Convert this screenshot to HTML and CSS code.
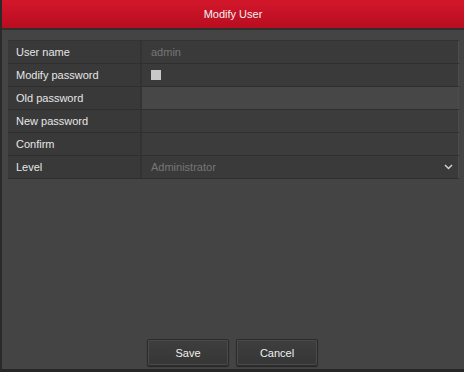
FILE: index.html
```html
<!DOCTYPE html>
<html lang="en">
<head>
    <meta charset="UTF-8">
    <title>Modify User</title>
    <link rel="stylesheet" href="styles.css">
</head>
<body>
    <div class="dialog">
        <div class="title">Modify User</div>
        <div class="content">
            <div class="form">
                <div class="row">
                    <div class="label">User name</div>
                    <div class="value muted">admin</div>
                </div>
                <div class="row">
                    <div class="label">Modify password</div>
                    <div class="value"><span class="check"></span></div>
                </div>
                <div class="row">
                    <div class="label">Old password</div>
                    <div class="value input light"></div>
                </div>
                <div class="row">
                    <div class="label">New password</div>
                    <div class="value input"></div>
                </div>
                <div class="row">
                    <div class="label">Confirm</div>
                    <div class="value input"></div>
                </div>
                <div class="row">
                    <div class="label">Level</div>
                    <div class="value muted select">
                        <span>Administrator</span>
                        <svg width="9" height="6" viewBox="0 0 9 6"><path d="M1 1 L4.5 4.5 L8 1" fill="none" stroke="#d0d0d0" stroke-width="1.5"/></svg>
                    </div>
                </div>
            </div>
            <div class="buttons">
                <button>Save</button>
                <button>Cancel</button>
            </div>
        </div>
    </div>
</body>
</html>
```

FILE: styles.css
```css
body {
    margin: 0;
    font-family: "Liberation Sans", Arial, sans-serif;
    background-color: #2b2b2b;
}
.dialog {
    width: 464px;
    height: 372px;
    display: flex;
    flex-direction: column;
    box-sizing: border-box;
    border-left: 2px solid #2a2a2a;
    border-bottom: 3px solid #262626;
}
.title {
    height: 28px;
    line-height: 28px;
    text-align: center;
    color: #f2f2f2;
    font-size: 11px;
    background: linear-gradient(#d3172b, #b80d20);
    border-bottom: 2px solid #2f2f2f;
}
.content {
    flex: 1;
    background-color: #444444;
    display: flex;
    flex-direction: column;
    padding: 10px 5px 3px 6px;
}
.form {
    display: flex;
    flex-direction: column;
    border-top: 1px solid #333333;
}
.row {
    display: flex;
    height: 22px;
    border-bottom: 1px solid #2f2f2f;
    font-size: 11px;
}
.label {
    width: 124px;
    padding-left: 8px;
    line-height: 22px;
    color: #e6e6e6;
    background-color: #393939;
    border-right: 2px solid #333333;
}
.value {
    flex: 1;
    display: flex;
    align-items: center;
    padding-left: 9px;
    background-color: #3a3a3a;
    border-right: 1px solid #4c4c4c;
}
.muted {
    color: #767676;
}
.input {
    background-color: #3c3c3c;
}
.input.light {
    background-color: #474747;
}
.check {
    width: 10px;
    height: 10px;
    background-color: #c9c9c9;
}
.select {
    justify-content: space-between;
    padding-right: 5px;
}
.buttons {
    margin-top: auto;
    display: flex;
    justify-content: center;
    gap: 7px;
    padding-right: 2px;
}
button {
    width: 82px;
    height: 27px;
    font-family: "Liberation Sans", Arial, sans-serif;
    font-size: 11px;
    color: #f0f0f0;
    background: linear-gradient(#3e3e3e, #363636);
    border: 1px solid #2c2c2c;
    box-shadow: inset 0 0 0 1px #4a4a4a, 0 1px 1px #262626;
    border-radius: 2px;
}
```
